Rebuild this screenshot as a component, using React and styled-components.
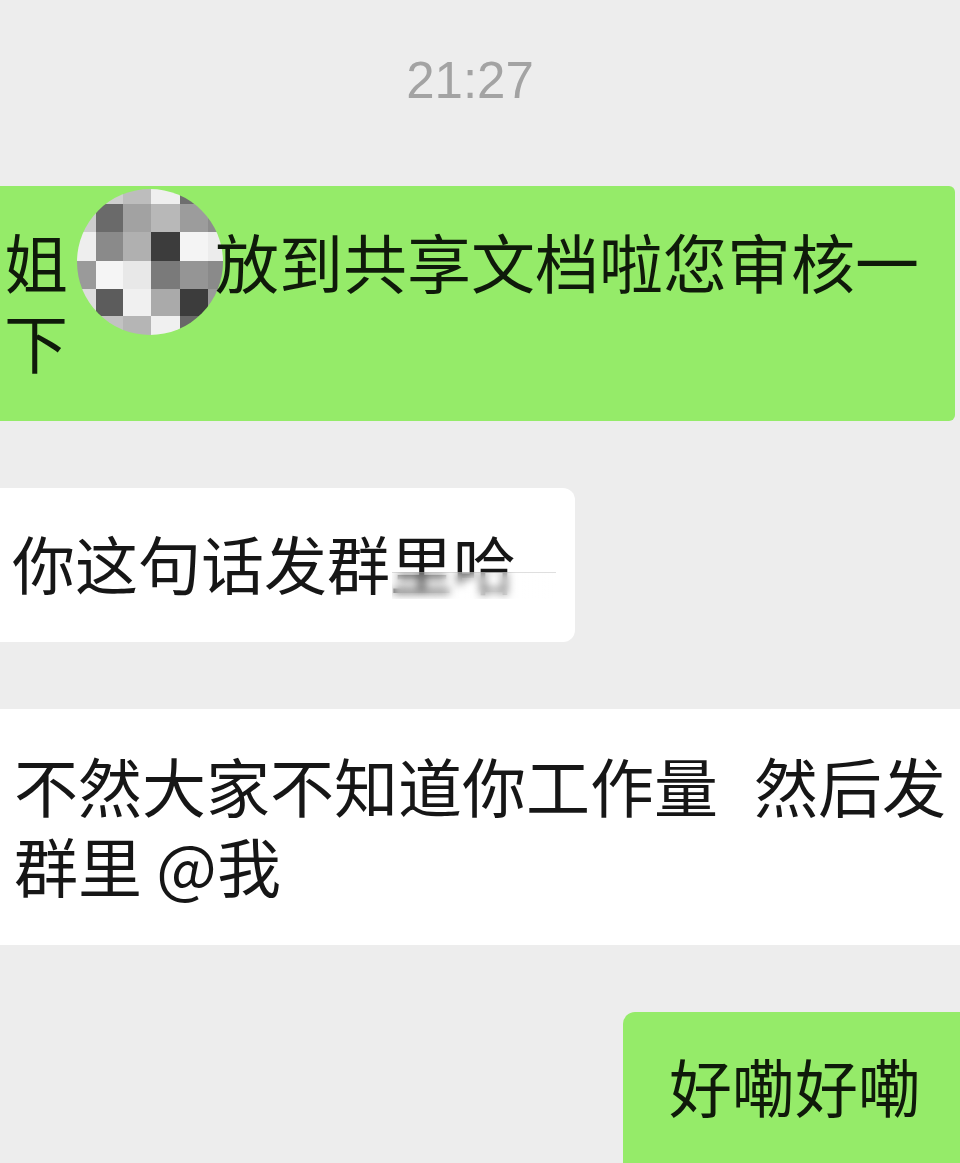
import styled, { createGlobalStyle } from 'styled-components';

const GlobalStyle = createGlobalStyle`
  html, body {
    margin: 0;
    padding: 0;
    background: #ededed;
  }
`;

// grey mosaic that hides the name in the first message
const MOSAIC_COLS = [0, 19, 46, 74, 103, 131, 146];
const MOSAIC_ROWS = [0, 15, 43, 72, 100, 127, 146];
const MOSAIC = [
  ['#d6d6d6', '#cfcfcf', '#bdbdbd', '#efefef', '#6e6e6e', '#8a8a8a'],
  ['#cdcdcd', '#6a6a6a', '#a2a2a2', '#b8b8b8', '#9c9c9c', '#8c8c8c'],
  ['#eeeeee', '#8a8a8a', '#b0b0b0', '#3c3c3c', '#f4f4f4', '#ececec'],
  ['#9a9a9a', '#f5f5f5', '#e8e8e8', '#7a7a7a', '#959595', '#8a8a8a'],
  ['#dddddd', '#5c5c5c', '#f0f0f0', '#aaaaaa', '#3c3c3c', '#9a9a9a'],
  ['#aaaaaa', '#c2c2c2', '#b5b5b5', '#f0f0f0', '#686868', '#8f8f8f'],
];

function Mosaic() {
  return (
    <MosaicWrap>
      <svg width="146" height="146" viewBox="0 0 146 146">
        <defs>
          <clipPath id="mosaic-clip">
            <circle cx="73" cy="73" r="73" />
          </clipPath>
        </defs>
        <g clipPath="url(#mosaic-clip)">
          {MOSAIC.map((row, r) =>
            row.map((fill, c) => (
              <rect
                key={`${r}-${c}`}
                x={MOSAIC_COLS[c]}
                y={MOSAIC_ROWS[r]}
                width={MOSAIC_COLS[c + 1] - MOSAIC_COLS[c]}
                height={MOSAIC_ROWS[r + 1] - MOSAIC_ROWS[r]}
                fill={fill}
              />
            ))
          )}
        </g>
      </svg>
    </MosaicWrap>
  );
}

export default function App() {
  return (
    <>
      <GlobalStyle />
      <Page>
        <TimeStamp>21:27</TimeStamp>
        <Chat>
          <Bubble $tone="green" $side="wide">
            姐<Mosaic />放到共享文档啦您审核一下
          </Bubble>

          <Bubble $tone="white" $side="left">
            你这句话发群<Smudged>里哈<SmudgeOverlay /></Smudged>
          </Bubble>

          <Bubble $tone="white" $side="full">
            不然大家不知道你工作量<Spacer />然后发<br />群里 @我
          </Bubble>

          <Bubble $tone="green" $side="right">好嘞好嘞</Bubble>
        </Chat>
      </Page>
    </>
  );
}

const Page = styled.div`
  height: 1163px;
  overflow: hidden;
  padding-top: 51px;
  box-sizing: border-box;
  font-family: "Noto Sans CJK SC", "Noto Sans", sans-serif;
`;

const TimeStamp = styled.div`
  font-family: "Liberation Sans", Arial, sans-serif;
  font-size: 51px;
  line-height: 60px;
  color: #a3a3a3;
  text-align: center;
  padding-right: 20px;
  margin-bottom: 75px;
`;

const Chat = styled.div`
  display: flex;
  flex-direction: column;
  gap: 67px;
`;

const SIDES = {
  wide: `
    width: 955px;
    padding: 34px 0 41px 4px;
    font-size: 64px;
    border-radius: 0 6px 6px 0;
  `,
  left: `
    align-self: flex-start;
    width: 575px;
    padding: 34px 0 40px 12px;
    font-size: 63px;
    white-space: nowrap;
    border-radius: 0 12px 12px 0;
  `,
  full: `
    width: 960px;
    padding: 35px 0 41px 14px;
    font-size: 64px;
  `,
  right: `
    align-self: flex-end;
    width: 337px;
    padding: 33px 0 60px 46px;
    font-size: 63px;
    border-radius: 12px 0 0 12px;
  `,
};

const Bubble = styled.div`
  box-sizing: border-box;
  background: ${p => (p.$tone === 'green' ? '#95eb69' : '#ffffff')};
  color: ${p => (p.$tone === 'green' ? '#0f1a0a' : '#161616')};
  line-height: 80px;
  ${p => SIDES[p.$side]}
`;

const Smudged = styled.span`
  position: relative;
  display: inline-block;
`;

const SmudgeOverlay = styled.span`
  position: absolute;
  left: 2px;
  right: -40px;
  top: 50px;
  height: 26px;
  background: linear-gradient(90deg, rgba(255, 255, 255, 0.15), rgba(255, 255, 255, 0.6));
  backdrop-filter: blur(4px);
  border-top: 1px solid rgba(150, 150, 150, 0.3);
`;

const Spacer = styled.span`
  display: inline-block;
  width: 36px;
`;

const MosaicWrap = styled.span`
  display: inline-block;
  width: 146px;
  height: 146px;
  margin: -40px -8px -47px 9px;
  vertical-align: baseline;
  line-height: 0;

  svg {
    display: block;
  }
`;
